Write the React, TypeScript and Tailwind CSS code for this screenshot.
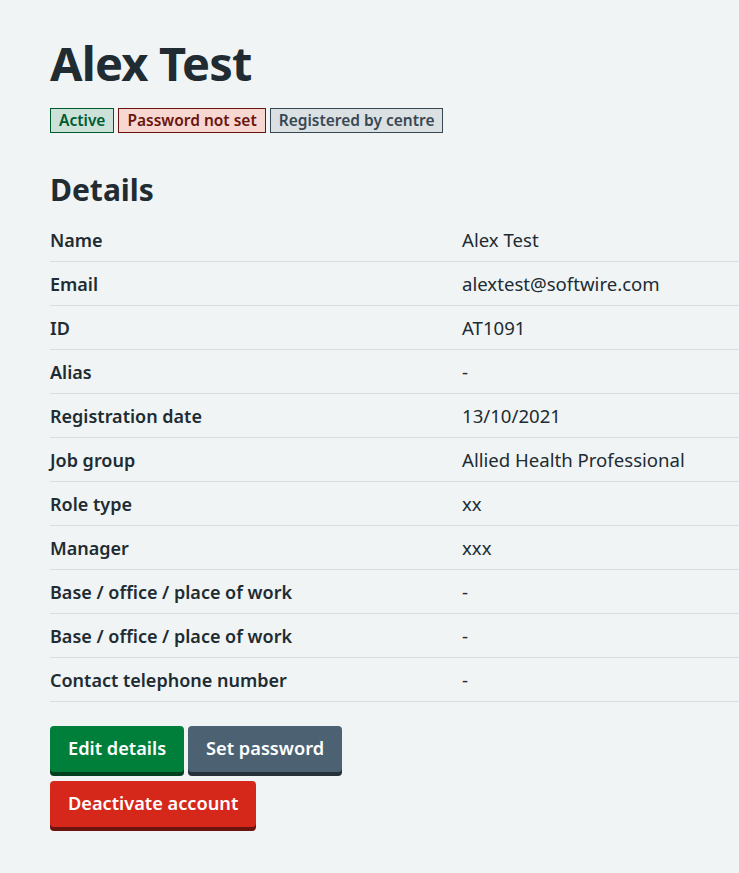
import React from "react";

const rows: [string, string][] = [
  ["Name", "Alex Test"],
  ["Email", "alextest@softwire.com"],
  ["ID", "AT1091"],
  ["Alias", "-"],
  ["Registration date", "13/10/2021"],
  ["Job group", "Allied Health Professional"],
  ["Role type", "xx"],
  ["Manager", "xxx"],
  ["Base / office / place of work", "-"],
  ["Base / office / place of work", "-"],
  ["Contact telephone number", "-"],
];

export default function App() {
  return (
    <div
      className="min-h-[873px] w-full overflow-hidden bg-[#f0f4f5] text-[#212b32] pl-[50px] pt-[30px]"
      style={{ fontFamily: '"Noto Sans", "Open Sans", Arial, sans-serif' }}
    >
      <h1 className="text-[47px] font-bold leading-[66px] tracking-[-0.8px]">Alex Test</h1>
      <div className="mt-[12px] flex gap-[4px]">
        <span className="h-[25px] border border-[#005a30] bg-[#cce2d8] px-[8px] text-[15.5px] font-semibold leading-[23px] text-[#005a30]">
          Active
        </span>
        <span className="h-[25px] border border-[#6b140e] bg-[#f6d7d2] px-[8px] text-[15.5px] font-semibold leading-[23px] text-[#6b140e]">
          Password not set
        </span>
        <span className="h-[25px] border border-[#384853] bg-[#dbe0e3] px-[8px] text-[15.5px] font-semibold leading-[23px] text-[#384853]">
          Registered by centre
        </span>
      </div>
      <h2 className="mt-[37px] text-[30px] font-bold leading-[40px]">Details</h2>
      <div className="mt-[8px] w-[900px]">
        {rows.map(([k, v], i) => (
          <div key={i} className="flex h-[44px] items-center border-b border-[#d8dde0] text-[18px] leading-[26px]">
            <div className="w-[412px] font-semibold">{k}</div>
            <div className="text-[18.6px]">{v}</div>
          </div>
        ))}
      </div>
      <div className="mt-[24px] flex flex-wrap gap-x-[4px] gap-y-[5px] w-[310px]">
        <button className="h-[46px] rounded-[4px] bg-[#007f3b] px-[18px] text-[18.2px] font-semibold text-white shadow-[0_4px_0_#00401e]">
          Edit details
        </button>
        <button className="h-[46px] rounded-[4px] bg-[#4c6272] px-[18px] text-[18.2px] font-semibold text-white shadow-[0_4px_0_#263139]">
          Set password
        </button>
        <button className="mt-[4px] h-[46px] rounded-[4px] bg-[#d5281b] px-[18px] text-[18.2px] font-semibold text-white shadow-[0_4px_0_#6b140e]">
          Deactivate account
        </button>
      </div>
    </div>
  );
}
